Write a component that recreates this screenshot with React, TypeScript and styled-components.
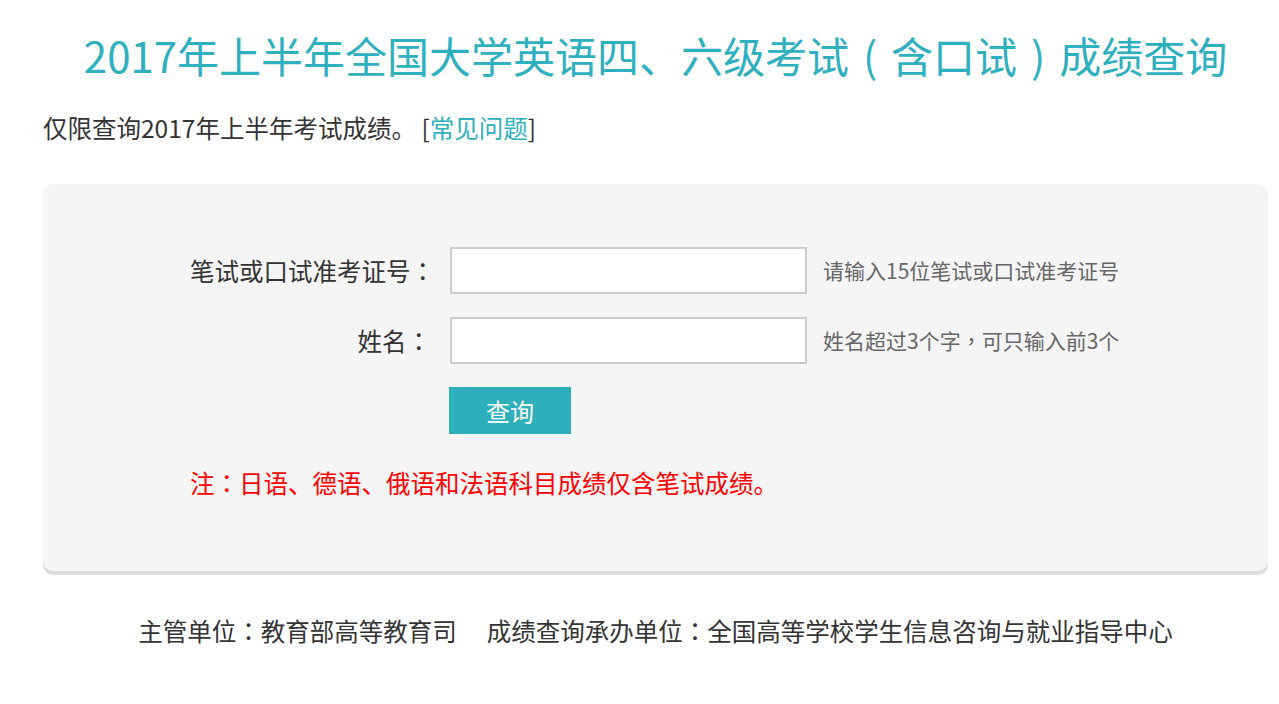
import styled, { createGlobalStyle } from 'styled-components';

const GlobalStyle = createGlobalStyle`
  body {
    margin: 0;
    background: #ffffff;
    font-family: "Noto Sans CJK SC", "Noto Sans", sans-serif;
    color: #333333;
  }
`;

const TEAL = '#2fb0bf';

// full-width colons and commas sit centred in the cell in the original font
const Punct = styled.span`
  font-family: "Noto Sans CJK TC", "Noto Sans CJK SC", sans-serif;
`;

// the title brackets are centred in a full-width cell
const Bracket = styled.span`
  display: inline-block;
  width: 1em;
  text-align: center;
`;

function App() {
  return (
    <>
      <GlobalStyle />
      <Page>
        <Title>
          2017年上半年全国大学英语四、六级考试<Bracket>(</Bracket>含口试<Bracket>)</Bracket>成绩查询
        </Title>
        <Intro>
          仅限查询2017年上半年考试成绩。 [<IntroLink href="#">常见问题</IntroLink>]
        </Intro>
        <QueryBox>
          <Form onSubmit={(e) => e.preventDefault()}>
            <Label htmlFor="zkzh">
              笔试或口试准考证号<Punct>：</Punct>
            </Label>
            <Input id="zkzh" type="text" />
            <Hint>请输入15位笔试或口试准考证号</Hint>

            <Label htmlFor="xm">
              姓名<Punct>：</Punct>
            </Label>
            <Input id="xm" type="text" />
            <Hint>
              姓名超过3个字<Punct>，</Punct>可只输入前3个
            </Hint>

            <span />
            <SubmitButton type="submit">查询</SubmitButton>
            <span />
          </Form>
          <Note>
            注<Punct>：</Punct>日语、德语、俄语和法语科目成绩仅含笔试成绩。
          </Note>
        </QueryBox>
        <Footer>
          主管单位<Punct>：</Punct>教育部高等教育司
          <FooterGap />
          成绩查询承办单位<Punct>：</Punct>全国高等学校学生信息咨询与就业指导中心
        </Footer>
      </Page>
    </>
  );
}

export default App;

const Page = styled.div`
  width: 1225px;
  margin-left: 43px;
`;

const Title = styled.h1`
  margin: 25px 0 0;
  font-size: 42px;
  line-height: 60px;
  font-weight: normal;
  text-align: center;
  color: ${TEAL};
  white-space: nowrap;
`;

const Intro = styled.p`
  margin: 25px 0 0;
  font-size: 24.5px;
  line-height: 36px;
  color: #333333;
`;

const IntroLink = styled.a`
  color: ${TEAL};
  text-decoration: none;
`;

const QueryBox = styled.div`
  margin-top: 38px;
  background: #f5f5f5;
  border-radius: 10px;
  box-shadow: 0 4px 0 #dddddd;
  padding: 63px 0 70px 147px;
`;

const Form = styled.form`
  display: grid;
  grid-template-columns: 260px 357px 1fr;
  row-gap: 23px;
  align-items: center;
`;

const Label = styled.label`
  padding-right: 19px;
  text-align: right;
  font-size: 24.5px;
  line-height: 47px;
  color: #333333;
  white-space: nowrap;
`;

const Input = styled.input`
  box-sizing: border-box;
  width: 357px;
  height: 47px;
  border: 2px solid #cccccc;
  background: #ffffff;
  outline: none;
  font-size: 20px;
  padding: 0 8px;
`;

const Hint = styled.span`
  margin-left: 16px;
  font-size: 21px;
  line-height: 47px;
  color: #666666;
  white-space: nowrap;
`;

const SubmitButton = styled.button`
  width: 122px;
  height: 47px;
  margin-left: -1px;
  border: none;
  background: #2eafbb;
  color: #ffffff;
  font-family: inherit;
  font-size: 24px;
  cursor: pointer;
`;

const Note = styled.p`
  margin: 31px 0 0;
  font-size: 24.5px;
  line-height: 36px;
  color: #ff0000;
`;

const Footer = styled.p`
  margin: 42px 0 0;
  text-align: center;
  font-size: 24.5px;
  line-height: 36px;
  color: #333333;
  white-space: nowrap;
`;

const FooterGap = styled.span`
  display: inline-block;
  width: 30px;
`;
